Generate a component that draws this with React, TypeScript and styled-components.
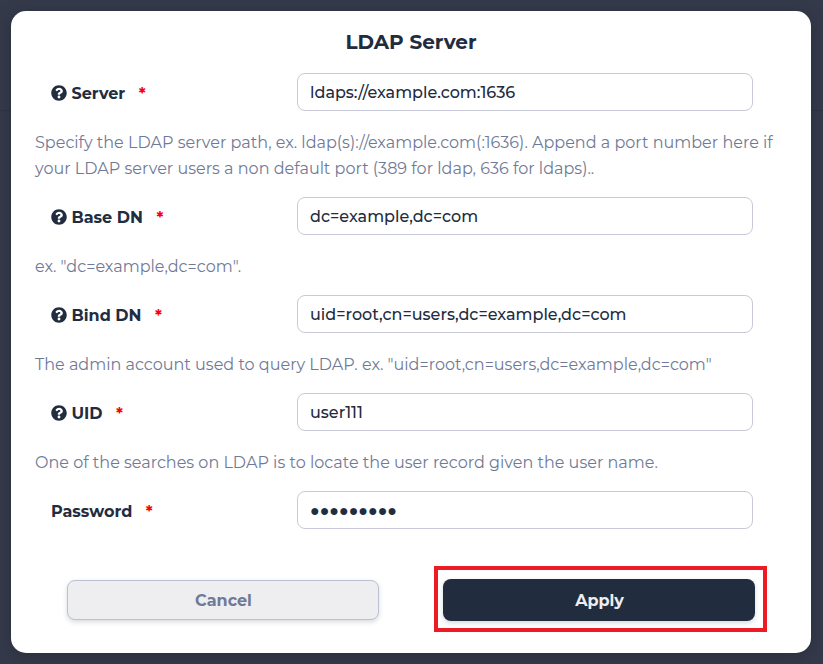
import React from 'react';
import styled, { createGlobalStyle } from 'styled-components';
import { FaQuestionCircle } from 'react-icons/fa';

const GlobalStyle = createGlobalStyle`
  *, *::before, *::after { box-sizing: border-box; }
  body {
    margin: 0;
    background: #353a4b;
    color: #222c3f;
    font: 400 16px/26px Montserrat, Inter, sans-serif;
  }
`;

const Backdrop = styled.div`
  height: 664px;
  padding: 11px 12px 11px 11px;
  overflow: hidden;
  background: linear-gradient(#2e3444, #2e3444) 0 110px / 100% 1px no-repeat, #353a4b;
`;

const Dialog = styled.section`
  width: 800px;
  height: 642px;
  padding: 18px 24px 0;
  background: #fff;
  border-radius: 15px;
  box-shadow: 0 3px 14px rgba(32, 42, 46, 0.65);
`;

const Title = styled.h1`
  margin: 0 0 18px;
  font-size: 20px;
  line-height: 26px;
  font-weight: 700;
  text-align: center;
`;

const Row = styled.div`
  display: grid;
  grid-template-columns: 246px 456px;
  align-items: center;
  height: 38px;
  padding-left: 16px;
`;

const Label = styled.label`
  display: flex;
  align-items: center;
  padding-top: 4px;
  font-weight: 700;
  white-space: nowrap;
`;

const HelpIcon = styled(FaQuestionCircle)`
  width: 16px;
  height: 16px;
  margin: 0 4.5px 2px 0;
`;

const Required = styled.span`
  margin-left: 13.5px;
  color: #f00;
`;

const Input = styled.input<{ $masked?: boolean }>`
  width: 100%;
  height: 38px;
  padding: 0 12px;
  border: 1px solid #c9cad9;
  border-radius: 8px;
  background: #fff;
  color: #222c3f;
  font: ${(p) => (p.$masked ? "400 16px 'Noto Sans', sans-serif" : '500 16px Montserrat, Inter, sans-serif')};
  outline: none;
`;

const Help = styled.p`
  margin: 19px 0 15px;
  color: #707a97;
  letter-spacing: 0.01px;
`;

const Actions = styled.footer`
  display: flex;
  align-items: center;
  justify-content: space-between;
  margin: 37px 20px 0 32px;
`;

const Highlight = styled.div`
  display: flex;
  padding: 9px 8px 7px 5px;
  border: 4px solid #ed1c24;
`;

const Button = styled.button<{ $primary?: boolean }>`
  width: 312px;
  height: ${(p) => (p.$primary ? 42 : 40)}px;
  margin-top: ${(p) => (p.$primary ? 0 : 2)}px;
  padding: 0 0 0 1px;
  border: ${(p) => (p.$primary ? '0' : '1px solid #bbc1d2')};
  border-radius: 8px;
  background: ${(p) => (p.$primary ? '#222c3f' : '#eeeef0')};
  color: ${(p) => (p.$primary ? '#eeeef0' : '#707a97')};
  box-shadow: 0 2px 5px rgba(34, 44, 63, 0.18);
  font: 700 16px Montserrat, Inter, sans-serif;
`;

interface Field {
  id: string;
  label: string;
  value: string;
  help?: string;
  masked?: boolean;
}

const fields: Field[] = [
  {
    id: 'server',
    label: 'Server',
    value: 'ldaps://example.com:1636',
    help: 'Specify the LDAP server path, ex. ldap(s)://example.com(:1636). Append a port number here if your LDAP server users a non default port (389 for ldap, 636 for ldaps)..',
  },
  { id: 'base', label: 'Base DN', value: 'dc=example,dc=com', help: 'ex. "dc=example,dc=com".' },
  {
    id: 'bind',
    label: 'Bind DN',
    value: 'uid=root,cn=users,dc=example,dc=com',
    help: 'The admin account used to query LDAP. ex. "uid=root,cn=users,dc=example,dc=com"',
  },
  {
    id: 'uid',
    label: 'UID',
    value: 'user111',
    help: 'One of the searches on LDAP is to locate the user record given the user name.',
  },
  { id: 'password', label: 'Password', value: '●●●●●●●●●', masked: true },
];

export default function App() {
  return (
    <>
      <GlobalStyle />
      <Backdrop>
        <Dialog role="dialog">
          <Title>LDAP Server</Title>
          {fields.map((f) => (
            <React.Fragment key={f.id}>
              <Row>
                <Label htmlFor={f.id}>
                  {f.help && <HelpIcon />}
                  {f.label}
                  <Required>*</Required>
                </Label>
                <Input id={f.id} type="text" $masked={f.masked} defaultValue={f.value} />
              </Row>
              {f.help && <Help>{f.help}</Help>}
            </React.Fragment>
          ))}
          <Actions>
            <Button>Cancel</Button>
            <Highlight>
              <Button $primary>Apply</Button>
            </Highlight>
          </Actions>
        </Dialog>
      </Backdrop>
    </>
  );
}
